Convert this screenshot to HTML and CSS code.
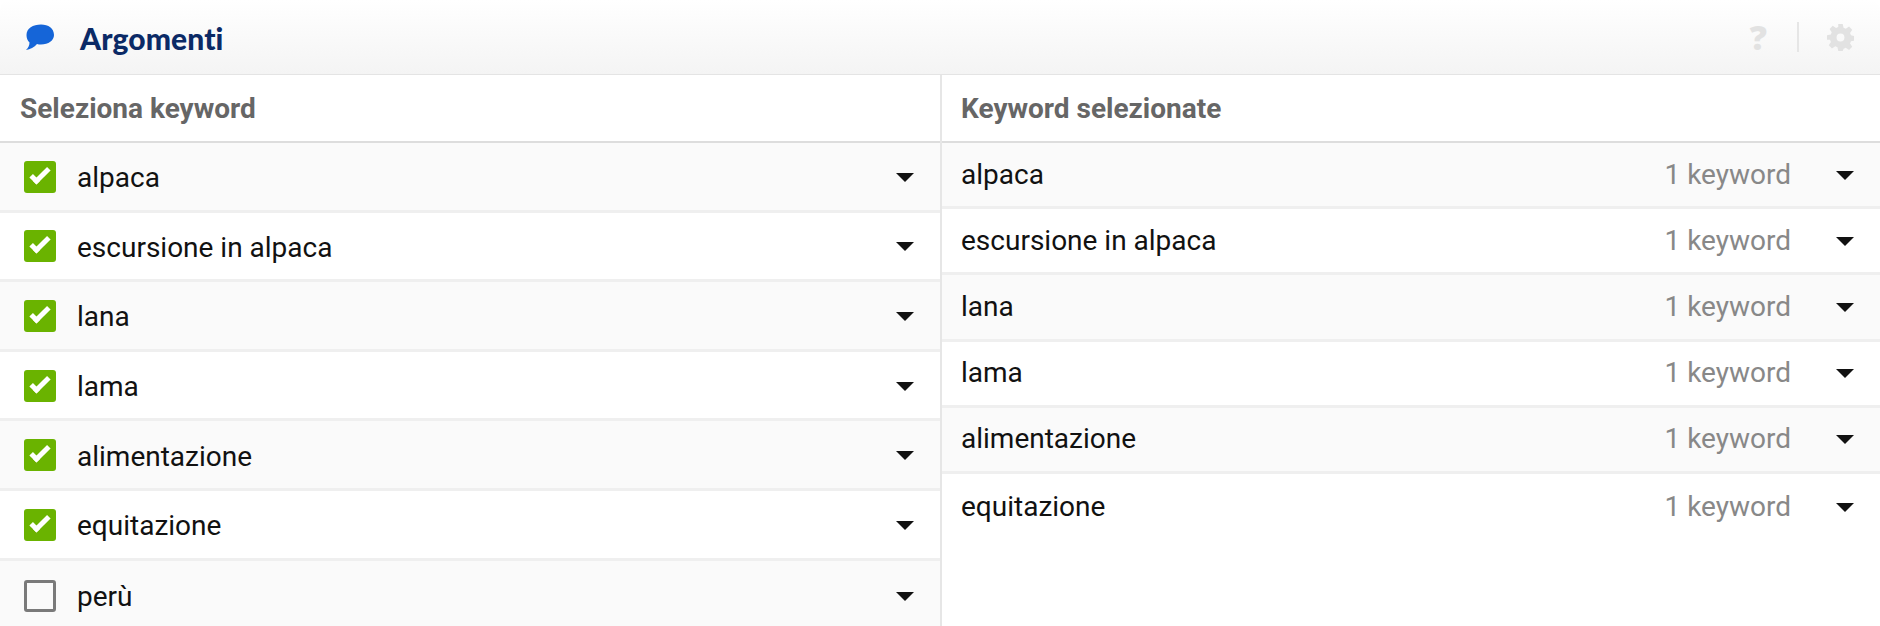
FILE: index.html
```html
<!DOCTYPE html>
<html lang="en">
<head>
    <meta charset="UTF-8">
    <title>Argomenti</title>
    <link rel="stylesheet" href="styles.css">
</head>
<body>
<div class="box">
    <header class="box-head">
        <svg class="head-icon" viewBox="0 0 30 26" width="30" height="26"><path fill="#1565d8" d="M16 0.500C23.500 0.500 29 4.500 29 11C29 16.500 23.500 20.500 16 20.500C14.500 20.500 13.300 20.400 12 20C9.500 23 5 25.500 1 26C3 24 4.500 21.500 4.500 18.500C2.500 16.500 1.500 14 1.500 11C1.500 4.500 8 0.500 16 0.500Z"/></svg>
        <h1>Argomenti</h1>
        <div class="head-tools">
            <span class="help">?</span>
            <span class="tool-sep"></span>
            <svg viewBox="0 0 24 24" width="27" height="27"><path fill="#e2e2e2" fill-rule="evenodd" d="M10 0h4l.7 3.400 2 .8 2.900-1.900 2.800 2.800-1.900 2.900.8 2 3.400.7v4l-3.400.7-.8 2 1.900 2.900-2.800 2.800-2.900-1.900-2 .8L14 24h-4l-.7-3.400-2-.8-2.900 1.900-2.800-2.800 1.900-2.900-.8-2L0 14v-4l3.400-.7.8-2-1.900-2.900 2.800-2.800 2.900 1.900 2-.8zM12 8.500a3.500 3.500 0 1 0 0 7 3.500 3.500 0 0 0 0-7z"/></svg>
        </div>
    </header>
    <div class="columns">
        <section class="col col-left">
            <h2>Seleziona keyword</h2>
            <ul class="rows">
                <li class="row"><span class="check on"></span><span class="name">alpaca</span><span class="caret"></span></li>
                <li class="row"><span class="check on"></span><span class="name">escursione in alpaca</span><span class="caret"></span></li>
                <li class="row"><span class="check on"></span><span class="name">lana</span><span class="caret"></span></li>
                <li class="row"><span class="check on"></span><span class="name">lama</span><span class="caret"></span></li>
                <li class="row"><span class="check on"></span><span class="name">alimentazione</span><span class="caret"></span></li>
                <li class="row"><span class="check on"></span><span class="name">equitazione</span><span class="caret"></span></li>
                <li class="row"><span class="check"></span><span class="name">perù</span><span class="caret"></span></li>
            </ul>
        </section>
        <section class="col col-right">
            <h2>Keyword selezionate</h2>
            <ul class="rows">
                <li class="row"><span class="name">alpaca</span><span class="count">1 keyword</span><span class="caret"></span></li>
                <li class="row"><span class="name">escursione in alpaca</span><span class="count">1 keyword</span><span class="caret"></span></li>
                <li class="row"><span class="name">lana</span><span class="count">1 keyword</span><span class="caret"></span></li>
                <li class="row"><span class="name">lama</span><span class="count">1 keyword</span><span class="caret"></span></li>
                <li class="row"><span class="name">alimentazione</span><span class="count">1 keyword</span><span class="caret"></span></li>
                <li class="row"><span class="name">equitazione</span><span class="count">1 keyword</span><span class="caret"></span></li>
            </ul>
        </section>
    </div>
</div>
</body>
</html>
```

FILE: styles.css
```css
html, body {
    margin: 0;
    padding: 0;
    height: 626px;
    overflow: hidden;
    background: #fff;
}
body {
    font-family: Roboto, sans-serif;
    color: #111;
}
.box {
    height: 626px;
    display: flex;
    flex-direction: column;
}
.box-head {
    height: 75px;
    box-sizing: border-box;
    flex: none;
    display: flex;
    align-items: center;
    padding: 0 26px 0 25px;
    background: linear-gradient(#fff, #f4f4f4);
    border-radius: 10px 10px 0 0;
    border-bottom: 1px solid #e4e4e4;
}
.head-icon {
    margin-bottom: 1px;
}
.box-head h1 {
    margin: 2px 0 0 25px;
    font-family: Lato, sans-serif;
    font-size: 30px;
    font-weight: 900;
    letter-spacing: .1px;
    font-variant-ligatures: none;
    color: #0b2a66;
}
.head-tools {
    margin-left: auto;
    display: flex;
    align-items: center;
}
.help {
    font-family: "Open Sans", sans-serif;
    font-size: 34px;
    font-weight: 800;
    color: #e2e2e2;
    line-height: 36px;
}
.tool-sep {
    width: 2px;
    height: 30px;
    margin: 0 28px 0 30px;
    background: #e6e6e6;
}
.columns {
    flex: 1;
    display: flex;
    min-height: 0;
}
.col {
    min-width: 0;
}
.col-left {
    width: 940px;
    flex: none;
    border-right: 2px solid #e6e6e6;
}
.col-right {
    flex: 1;
}
.col h2 {
    margin: 0;
    height: 68px;
    box-sizing: border-box;
    padding: 0 20px;
    display: flex;
    align-items: center;
    font-size: 28px;
    font-weight: 700;
    color: #666;
    border-bottom: 2px solid #ddd;
}
.col-right h2 {
    padding-left: 19px;
}
.rows {
    list-style: none;
    margin: 0;
    padding: 0;
}
.row {
    display: flex;
    align-items: center;
    box-sizing: border-box;
    font-size: 28px;
    border-bottom: 3px solid #efefef;
}
.row:nth-child(odd) {
    background: #fafafa;
}
.row:last-child {
    border-bottom: 0;
}
.col-left .row {
    height: 69.6px;
    padding: 0 26px 0 24px;
}
.col-left .name {
    padding-top: 3px;
}
.col-right .row {
    height: 66.2px;
    padding: 1px 26px 2px 19px;
}
.col-right .row:last-child {
    background: #fff;
}
.check {
    width: 32px;
    height: 32px;
    box-sizing: border-box;
    flex: none;
    margin: 1px 21px 0 0;
    border: 3px solid #7a7a7a;
    border-radius: 3px;
    background: #fafafa;
    position: relative;
}
.check.on {
    background: #6ab300;
    border: 0;
}
.check.on::after {
    content: "";
    position: absolute;
    left: 6px;
    top: 8px;
    width: 20px;
    height: 10px;
    border-left: 5px solid #fff;
    border-bottom: 5px solid #fff;
    transform: rotate(-45deg);
    box-sizing: border-box;
}
.name {
    flex: 1;
}
.count {
    color: #888;
    margin-right: 45px;
}
.caret {
    width: 0;
    height: 0;
    flex: none;
    margin-top: 2px;
    border-style: solid;
    border-width: 9px 9px 0;
    border-color: #111 transparent transparent;
}
```
